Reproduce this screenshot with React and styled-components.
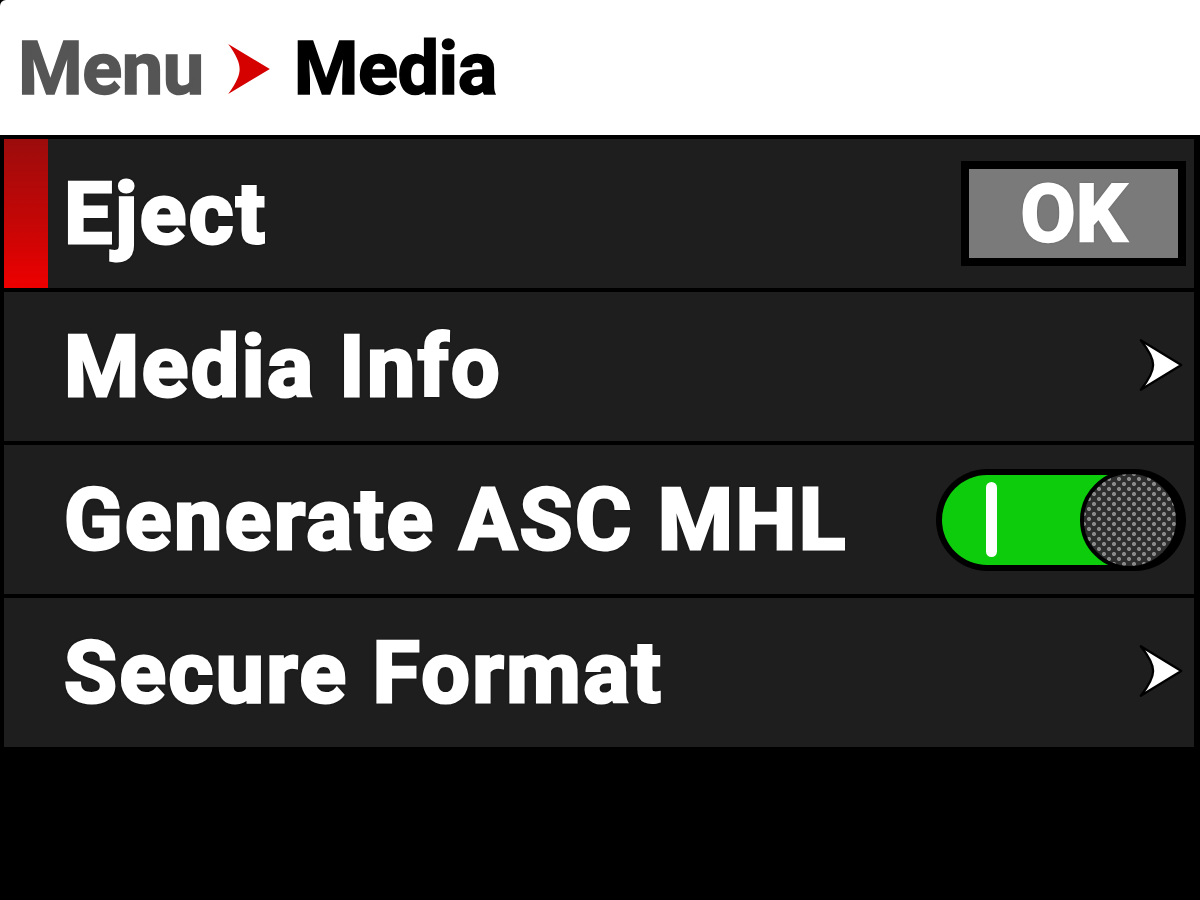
import styled, { createGlobalStyle } from "styled-components";

const GlobalStyle = createGlobalStyle`
  html, body {
    margin: 0;
    padding: 0;
    background: #000;
  }
  body {
    font-family: Roboto, "Liberation Sans", sans-serif;
  }
`;

const items = [
  { label: "Eject", control: "ok", selected: true },
  { label: "Media Info", control: "chevron" },
  { label: "Generate ASC MHL", control: "toggle" },
  { label: "Secure Format", control: "chevron" },
];

// arrowhead with a hollowed back edge, used in the breadcrumb and on the rows
const Arrow = ({ color, width, height, outline }) => (
  <svg width={width} height={height} viewBox="0 0 40 48">
    <path
      d={
        outline
          ? "M2 2 L38 24 L2 46 C10 36 13 30 13 24 C13 18 10 12 2 2 Z"
          : "M0 0 L40 24 L0 48 C8 37 11 30 11 24 C11 18 8 11 0 0 Z"
      }
      fill={color}
      stroke={outline ? "#000" : "none"}
      strokeWidth="2"
      strokeLinejoin="round"
    />
  </svg>
);

const App = () => {
  return (
    <Screen>
      <GlobalStyle />
      <Header>
        <Crumb>Menu</Crumb>
        <HeaderArrow>
          <Arrow color="#d50000" width={42} height={50} />
        </HeaderArrow>
        <Crumb $current>Media</Crumb>
      </Header>

      <List>
        {items.map((item) => (
          <Row key={item.label}>
            <Marker $active={item.selected} />
            <Label>{item.label}</Label>
            {item.control === "ok" && (
              <OkButton>
                <span>OK</span>
              </OkButton>
            )}
            {item.control === "chevron" && (
              <Chevron>
                <Arrow color="#fff" width={50} height={54} outline />
              </Chevron>
            )}
            {item.control === "toggle" && (
              <Toggle>
                <Track>
                  <OnMark />
                </Track>
                <Knob />
              </Toggle>
            )}
          </Row>
        ))}
      </List>
    </Screen>
  );
};

export default App;

const Screen = styled.div`
  width: 1200px;
  height: 900px;
  background: #000;
  overflow: hidden;
`;

const Header = styled.div`
  height: 135px;
  background: #fff;
  border-top-left-radius: 6px;
  display: flex;
  align-items: center;
  padding: 2px 0 0 18px;
  box-sizing: border-box;
`;

const Crumb = styled.span`
  font-size: 74px;
  font-weight: 700;
  letter-spacing: -0.5px;
  color: ${(p) => (p.$current ? "#000" : "#555")};
  -webkit-text-stroke: 1.5px ${(p) => (p.$current ? "#000" : "#555")};
`;

const HeaderArrow = styled.span`
  display: flex;
  margin: 0 24px 0 24px;
`;

const List = styled.div`
  display: flex;
  flex-direction: column;
  gap: 4px;
  padding: 4px 6px 0 4px;
`;

const Row = styled.div`
  height: 149px;
  background: #1e1e1e;
  display: grid;
  grid-template-columns: 44px 1fr auto;
  align-items: center;
  padding-right: 8px;
`;

const Marker = styled.div`
  align-self: stretch;
  background: ${(p) =>
    p.$active ? "linear-gradient(180deg, #9c0c0c 0%, #c40606 55%, #ee0000 100%)" : "transparent"};
`;

const Label = styled.span`
  padding-left: 16px;
  font-size: 86px;
  font-weight: 700;
  color: #fff;
  letter-spacing: 2.5px;
  -webkit-text-stroke: 3px #fff;
  text-shadow: 0 0 3px #000, 0 0 3px #000;
  white-space: nowrap;
`;

const OkButton = styled.div`
  width: 209px;
  height: 89px;
  border: 8px solid #000;
  background: #7a7a7a;
  display: flex;
  align-items: center;
  justify-content: center;
  span {
    font-size: 80px;
    font-weight: 700;
    color: #fff;
    -webkit-text-stroke: 2.5px #fff;
    text-shadow: 0 0 3px #333;
  }
`;

const Chevron = styled.div`
  display: flex;
  align-items: center;
  margin-top: -4px;
`;

const Toggle = styled.div`
  position: relative;
  width: 250px;
  height: 102px;
  border-radius: 51px;
  background: #000;
  padding: 6px;
  box-sizing: border-box;
`;

const Track = styled.div`
  box-sizing: border-box;
  height: 100%;
  width: 172px;
  border-radius: 45px 0 0 45px;
  background: #0ccc0c;
  display: flex;
  align-items: center;
  padding-left: 44px;
`;

const OnMark = styled.div`
  width: 11px;
  height: 75px;
  border-radius: 6px;
  background: #fff;
`;

const Knob = styled.div`
  position: absolute;
  right: 6px;
  top: 1px;
  width: 92px;
  height: 92px;
  border: 4px solid #000;
  border-radius: 50%;
  background-color: #2e2e2e;
  background-image: radial-gradient(circle, #8a8a8a 1.6px, transparent 2.4px),
    radial-gradient(circle, #8a8a8a 1.6px, transparent 2.4px);
  background-size: 10px 10px;
  background-position: 0 0, 5px 5px;
`;
